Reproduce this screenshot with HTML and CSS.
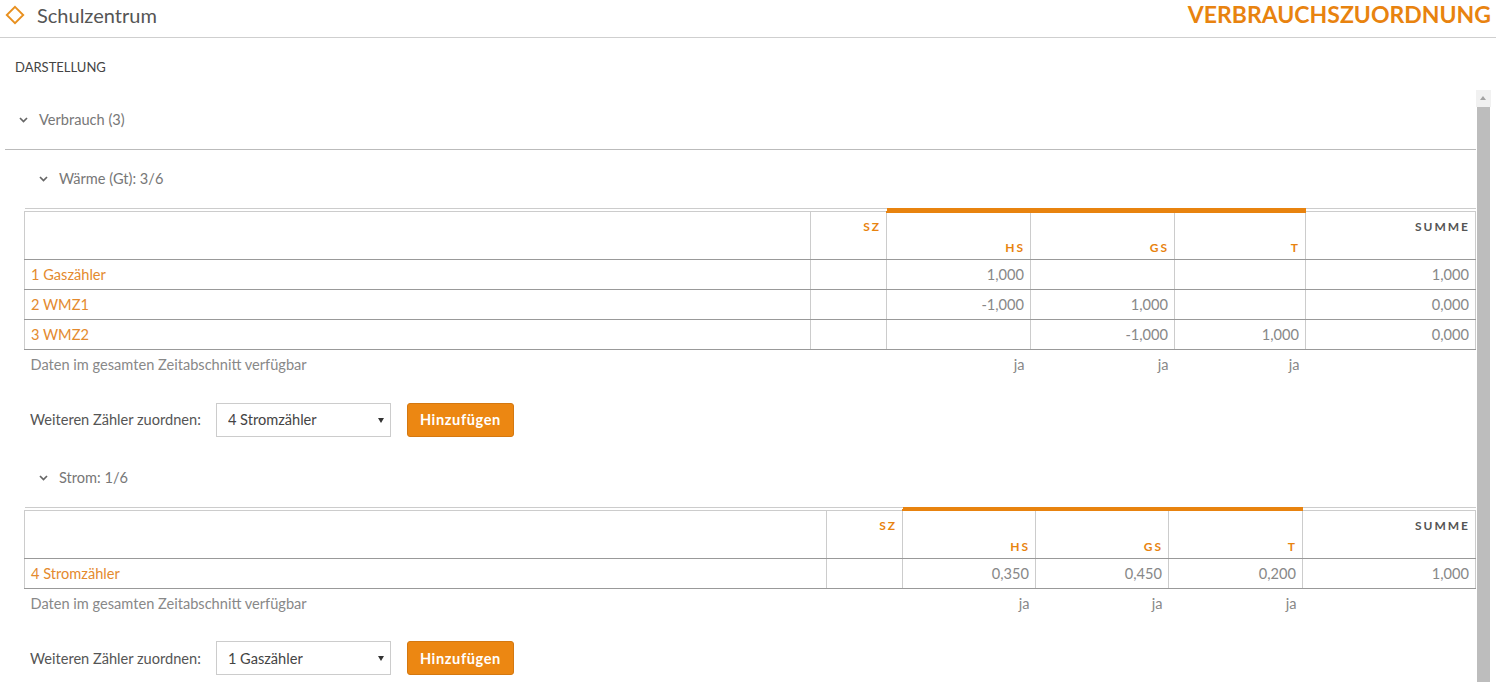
FILE: index.html
```html
<!DOCTYPE html>
<html lang="de">
<head>
    <meta charset="UTF-8">
    <meta name="viewport" content="width=device-width, initial-scale=1.0">
    <title>Verbrauchszuordnung</title>
    <link rel="stylesheet" href="styles.css">
</head>
<body>
    <header class="topbar">
        <div class="site">
            <svg class="site-icon" width="20" height="20" viewBox="0 0 20 20">
                <path d="M10 1.8 18.2 10 10 18.2 1.8 10Z" fill="none" stroke="#e8901f" stroke-width="1.9"/>
            </svg>
            <span class="site-name">Schulzentrum</span>
        </div>
        <h1 class="page-title">VERBRAUCHSZUORDNUNG</h1>
    </header>

    <main class="page">
        <div class="view-label">DARSTELLUNG</div>

        <div class="pane">
            <div class="pane-content">
                <div class="group-head">
                    <svg class="chevron" width="9" height="6" viewBox="0 0 9 6"><polyline points="1,1 4.5,4.5 8,1" fill="none" stroke="#666" stroke-width="1.7"/></svg>
                    <span>Verbrauch (3)</span>
                </div>

                <!-- Wärme -->
                <section class="medium">
                    <div class="medium-head">
                        <svg class="chevron" width="9" height="6" viewBox="0 0 9 6"><polyline points="1,1 4.5,4.5 8,1" fill="none" stroke="#666" stroke-width="1.7"/></svg>
                        <span>Wärme (Gt): 3/6</span>
                    </div>
                    <table class="alloc alloc-waerme">
                        <colgroup>
                            <col class="c-name"><col class="c-sz"><col class="c-hs"><col class="c-gs"><col class="c-t"><col class="c-sum">
                        </colgroup>
                        <thead>
                            <tr class="group-row">
                                <td colspan="2"></td>
                                <td colspan="3" class="group"></td>
                                <td></td>
                            </tr>
                            <tr class="head-row">
                                <th></th>
                                <th class="top">SZ</th>
                                <th class="grouped">HS</th>
                                <th class="grouped">GS</th>
                                <th class="grouped">T</th>
                                <th class="top sum">SUMME</th>
                            </tr>
                        </thead>
                        <tbody>
                            <tr><td class="name">1 Gaszähler</td><td></td><td>1,000</td><td></td><td></td><td>1,000</td></tr>
                            <tr><td class="name">2 WMZ1</td><td></td><td>-1,000</td><td>1,000</td><td></td><td>0,000</td></tr>
                            <tr><td class="name">3 WMZ2</td><td></td><td></td><td>-1,000</td><td>1,000</td><td>0,000</td></tr>
                        </tbody>
                        <tfoot>
                            <tr><td class="note">Daten im gesamten Zeitabschnitt verfügbar</td><td></td><td>ja</td><td>ja</td><td>ja</td><td></td></tr>
                        </tfoot>
                    </table>
                    <div class="assign">
                        <label class="assign-label">Weiteren Zähler zuordnen:</label>
                        <div class="select">
                            <select>
                                <option>4 Stromzähler</option>
                            </select>
                        </div>
                        <button class="btn">Hinzufügen</button>
                    </div>
                </section>

                <!-- Strom -->
                <section class="medium">
                    <div class="medium-head">
                        <svg class="chevron" width="9" height="6" viewBox="0 0 9 6"><polyline points="1,1 4.5,4.5 8,1" fill="none" stroke="#666" stroke-width="1.7"/></svg>
                        <span>Strom: 1/6</span>
                    </div>
                    <table class="alloc alloc-strom">
                        <colgroup>
                            <col class="c-name"><col class="c-sz"><col class="c-hs"><col class="c-gs"><col class="c-t"><col class="c-sum">
                        </colgroup>
                        <thead>
                            <tr class="group-row">
                                <td colspan="2"></td>
                                <td colspan="3" class="group"></td>
                                <td></td>
                            </tr>
                            <tr class="head-row">
                                <th></th>
                                <th class="top">SZ</th>
                                <th class="grouped">HS</th>
                                <th class="grouped">GS</th>
                                <th class="grouped">T</th>
                                <th class="top sum">SUMME</th>
                            </tr>
                        </thead>
                        <tbody>
                            <tr><td class="name">4 Stromzähler</td><td></td><td>0,350</td><td>0,450</td><td>0,200</td><td>1,000</td></tr>
                        </tbody>
                        <tfoot>
                            <tr><td class="note">Daten im gesamten Zeitabschnitt verfügbar</td><td></td><td>ja</td><td>ja</td><td>ja</td><td></td></tr>
                        </tfoot>
                    </table>
                    <div class="assign">
                        <label class="assign-label">Weiteren Zähler zuordnen:</label>
                        <div class="select">
                            <select>
                                <option>1 Gaszähler</option>
                            </select>
                        </div>
                        <button class="btn">Hinzufügen</button>
                    </div>
                </section>
            </div>

            <div class="scrollbar">
                <div class="scroll-up"></div>
                <div class="scroll-thumb"></div>
            </div>
        </div>
    </main>
</body>
</html>
```

FILE: styles.css
```css
* {
    box-sizing: border-box;
}
html, body {
    height: 100%;
}
body {
    margin: 0;
    font-family: Lato, "Open Sans", sans-serif;
    font-size: 14.6px;
    color: #555;
    background: #fff;
    overflow: hidden;
}

/* top bar */
.topbar {
    height: 38px;
    display: flex;
    align-items: center;
    justify-content: space-between;
    padding: 0 5px 0 5px;
    border-bottom: 1px solid #cfcfcf;
}
.site {
    display: flex;
    align-items: center;
    margin-top: -7px;
}
.site-icon {
    display: block;
    margin-right: 12px;
}
.site-name {
    font-size: 20px;
    color: #555;
}
.page-title {
    margin: 0;
    font-size: 23px;
    font-weight: 700;
    color: #e8830f;
    line-height: 1;
    margin-top: -8px;
}

.page {
    padding: 0 5px;
}
.view-label {
    height: 52px;
    padding: 21px 0 0 10px;
    font-size: 13px;
    line-height: 16px;
    color: #444;
}

/* scrolling pane */
.pane {
    display: flex;
    height: 592px;
    overflow: hidden;
}
.pane-content {
    flex: 1;
    overflow: hidden;
}
.scrollbar {
    width: 15px;
    display: flex;
    flex-direction: column;
}
.scroll-up {
    height: 17px;
    background: #f1f1f1;
    position: relative;
}
.scroll-up::after {
    content: "";
    position: absolute;
    left: 4px;
    top: 6px;
    border-left: 3.5px solid transparent;
    border-right: 3.5px solid transparent;
    border-bottom: 4px solid #a3a3a3;
}
.scroll-thumb {
    flex: 1;
    margin: 0 1px;
    background: #bdbdbd;
}

.group-head {
    height: 60px;
    display: flex;
    align-items: center;
    padding-left: 14px;
    border-bottom: 1px solid #bbb;
    color: #777;
}
.chevron {
    display: block;
    margin-right: 11px;
}

.medium {
    padding-left: 19px;
}
.medium-head {
    display: flex;
    align-items: center;
    padding: 20px 0 20px 15px;
    line-height: 18px;
    color: #777;
}

/* allocation table */
.alloc {
    width: 100%;
    table-layout: fixed;
    border-collapse: collapse;
}
.alloc td, .alloc th {
    padding: 0 6px;
    text-align: right;
    white-space: nowrap;
}
.alloc .group-row td {
    height: 3px;
    padding: 0;
    border-top: 1px solid #ccc;
}
.alloc .group-row td.group {
    background: #e8830f;
    border-top: 1px solid #e8830f;
}
.alloc .head-row {
    height: 48px;
}
.alloc th {
    border: 1px solid #ccc;
    border-bottom: 1px solid #999;
    font-size: 12px;
    font-weight: 700;
    letter-spacing: 2px;
    color: #e8830f;
    line-height: 14px;
}
.alloc th.top {
    vertical-align: top;
    padding-top: 8px;
    padding-right: 5px;
}
.alloc th.grouped {
    vertical-align: bottom;
    padding-bottom: 4px;
    padding-right: 5px;
    border-top: 2px solid #e8830f;
}
.alloc th.sum {
    color: #555;
}
.alloc tbody td {
    height: 30px;
    border-left: 1px solid #ccc;
    border-right: 1px solid #ccc;
    border-bottom: 1px solid #999;
    color: #888;
}
.alloc td.name, .alloc td.note {
    text-align: left;
}
.alloc tbody td.name {
    color: #e48a2e;
}
.alloc tfoot td {
    height: 30px;
    color: #888;
}

.alloc-waerme .c-name { width: 786px; }
.alloc-waerme .c-sz { width: 76px; }
.alloc-waerme .c-hs { width: 144px; }
.alloc-waerme .c-gs { width: 144px; }
.alloc-waerme .c-t { width: 131px; }
.alloc-waerme .c-sum { width: 170px; }

.alloc-strom .c-name { width: 802px; }
.alloc-strom .c-sz { width: 76px; }
.alloc-strom .c-hs { width: 133px; }
.alloc-strom .c-gs { width: 133px; }
.alloc-strom .c-t { width: 134px; }
.alloc-strom .c-sum { width: 173px; }

/* add meter form */
.assign {
    display: flex;
    align-items: center;
    margin: 23px 0 12px 6px;
}
.assign-label {
    color: #555;
    margin-right: 15px;
}
.select {
    position: relative;
    width: 175px;
    height: 34px;
    margin-right: 16px;
}
.select select {
    appearance: none;
    -webkit-appearance: none;
    width: 100%;
    height: 100%;
    border: 1px solid #ccc;
    border-radius: 0;
    background: #fff;
    padding: 0 24px 0 11px;
    font-family: inherit;
    font-size: 14.6px;
    color: #444;
}
.select::after {
    content: "";
    position: absolute;
    right: 7px;
    top: 15px;
    border-left: 3px solid transparent;
    border-right: 3px solid transparent;
    border-top: 5px solid #333;
    pointer-events: none;
}
.btn {
    height: 34px;
    padding: 0 12px;
    border: 1px solid #d47810;
    border-radius: 3px;
    background: #ec8712;
    color: #fff;
    font-family: inherit;
    font-size: 14.6px;
    font-weight: 700;
    letter-spacing: 0.6px;
}
```
